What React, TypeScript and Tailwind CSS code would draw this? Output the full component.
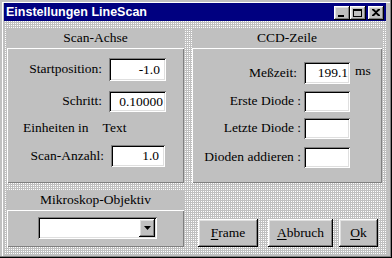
const raised = 'shadow-[inset_-1px_-1px_#000,inset_1px_1px_#fff,inset_-2px_-2px_#808080,inset_2px_2px_#dfdfdf]'
const sunken = 'shadow-[inset_1px_1px_#808080,inset_-1px_-1px_#fff,inset_2px_2px_#000,inset_-2px_-2px_#dfdfdf]'
const panel = 'shadow-[inset_1px_1px_#fff,inset_-1px_-1px_#808080]'
const dither = 'bg-[conic-gradient(#fff_0_25%,#c0c0c0_0)] bg-[length:2px_2px]'

const Field = ({ value, className }: { value?: string; className: string }) => (
    <div className={`bg-white ${sunken} flex items-center justify-end pr-[6px] leading-none ${className}`}>
        {value}
    </div>
)

const Group = ({ title, className, children }: { title: string; className: string; children: React.ReactNode }) => (
    <div className={`flex flex-col bg-[#c0c0c0] ${className}`}>
        <div className="h-[20px] flex items-center justify-center">{title}</div>
        <div className={`flex-1 ${panel}`}>{children}</div>
    </div>
)

const TitleButton = ({ children, className = '' }: { children: React.ReactNode; className?: string }) => (
    <div className={`w-[16px] h-[14px] bg-[#c0c0c0] ${raised} flex items-center justify-center ${className}`}>
        {children}
    </div>
)

const Button = ({ hot, rest, className }: { hot: string; rest: string; className: string }) => (
    <div className={`h-[28px] bg-[#c0c0c0] ${raised} flex items-center justify-center ${className}`}>
        <span><span className="underline underline-offset-2">{hot}</span>{rest}</span>
    </div>
)

export default function App() {
    return (
        <div className="w-[392px] h-[258px] bg-[#c0c0c0] pl-[4px] pt-[3px] pr-[6px] pb-[4px] flex flex-col shadow-[inset_-1px_-1px_#000,inset_-2px_-2px_#808080,inset_2px_2px_#c0c0c0,inset_3px_3px_#fff] font-['Liberation_Serif','Times_New_Roman',serif] text-[13.5px] text-black">

            {/* title bar */}
            <div className="h-[18px] bg-[#000080] flex items-center pl-[2px] pr-[2px]">
                <span className="text-white font-bold text-[12.5px] font-['Liberation_Sans',Arial,sans-serif] leading-none">
                    Einstellungen LineScan
                </span>
                <div className="ml-auto flex items-center mt-[1px]">
                    <TitleButton>
                        <div className="w-[6px] h-[2px] bg-black mt-[6px] -ml-[2px]" />
                    </TitleButton>
                    <TitleButton>
                        <div className="w-[9px] h-[8px] border border-black border-t-2 -ml-[1px]" />
                    </TitleButton>
                    <TitleButton className="ml-[2px]">
                        <svg width="8" height="7" viewBox="0 0 8 7" className="-ml-[1px]">
                            <path d="M0 0h2l2 2 2-2h2v1L5 3.5 8 6v1H6L4 5 2 7H0V6l3-2.5L0 1z" fill="#000" />
                        </svg>
                    </TitleButton>
                </div>
            </div>

            {/* client area */}
            <div className={`flex-1 flex gap-[8px] pl-[3px] pt-[7px] pr-[4px] ${dither}`}>

                {/* left column */}
                <div className="w-[177px] flex flex-col">
                    <Group title="Scan-Achse" className="h-[155px]">
                        <div className="flex items-center mt-[10px]">
                            <span className="w-[95px] text-right">Startposition:</span>
                            <Field value="-1.0" className="ml-[7px] w-[57px] h-[23px]" />
                        </div>
                        <div className="flex items-center mt-[10px]">
                            <span className="w-[95px] text-right">Schritt:</span>
                            <Field value="0.10000" className="ml-[7px] w-[57px] h-[21px] !pr-[3px]" />
                        </div>
                        <div className="flex items-center h-[16px] mt-[8px] pl-[16px]">
                            <span>Einheiten in</span>
                            <span className="ml-[14px]">Text</span>
                        </div>
                        <div className="flex items-center mt-[9px]">
                            <span className="w-[97px] text-right">Scan-Anzahl:</span>
                            <Field value="1.0" className="ml-[7px] w-[54px] h-[22px]" />
                        </div>
                    </Group>

                    <Group title="Mikroskop-Objektiv" className="h-[57px] mt-[7px]">
                        <div className="pl-[31px] pt-[7px]">
                            <div className={`w-[119px] h-[22px] bg-white ${sunken} flex justify-end p-[2px]`}>
                                <div className={`w-[16px] h-full bg-[#c0c0c0] ${raised} flex items-center justify-center`}>
                                    <svg width="7" height="4" viewBox="0 0 7 4">
                                        <path d="M0 0h7L3.5 4z" fill="#000" />
                                    </svg>
                                </div>
                            </div>
                        </div>
                    </Group>
                </div>

                {/* right column */}
                <div className="w-[190px] flex flex-col">
                    <Group title="CCD-Zeile" className="h-[155px]">
                        <div className="flex items-center mt-[14px]">
                            <span className="w-[109px] text-right pr-[4px]">Meßzeit:</span>
                            <Field value="199.1" className="ml-[3px] w-[46px] h-[22px] !pr-[2px]" />
                            <span className="ml-[5px] -mt-[4px]">ms</span>
                        </div>
                        <div className="flex items-center mt-[7px]">
                            <span className="w-[109px] text-right">Erste Diode :</span>
                            <Field className="ml-[3px] w-[46px] h-[21px]" />
                        </div>
                        <div className="flex items-center mt-[6px]">
                            <span className="w-[109px] text-right">Letzte Diode :</span>
                            <Field className="ml-[3px] w-[46px] h-[21px]" />
                        </div>
                        <div className="flex items-center mt-[8px]">
                            <span className="w-[109px] text-right">Dioden addieren :</span>
                            <Field className="ml-[3px] w-[46px] h-[21px]" />
                        </div>
                    </Group>

                    <div className="flex mt-[36px]">
                        <Button hot="F" rest="rame" className="ml-[6px] w-[60px]" />
                        <Button hot="A" rest="bbruch" className="ml-[10px] w-[65px]" />
                        <Button hot="O" rest="k" className="ml-[6px] w-[39px]" />
                    </div>
                </div>
            </div>
        </div>
    )
}
